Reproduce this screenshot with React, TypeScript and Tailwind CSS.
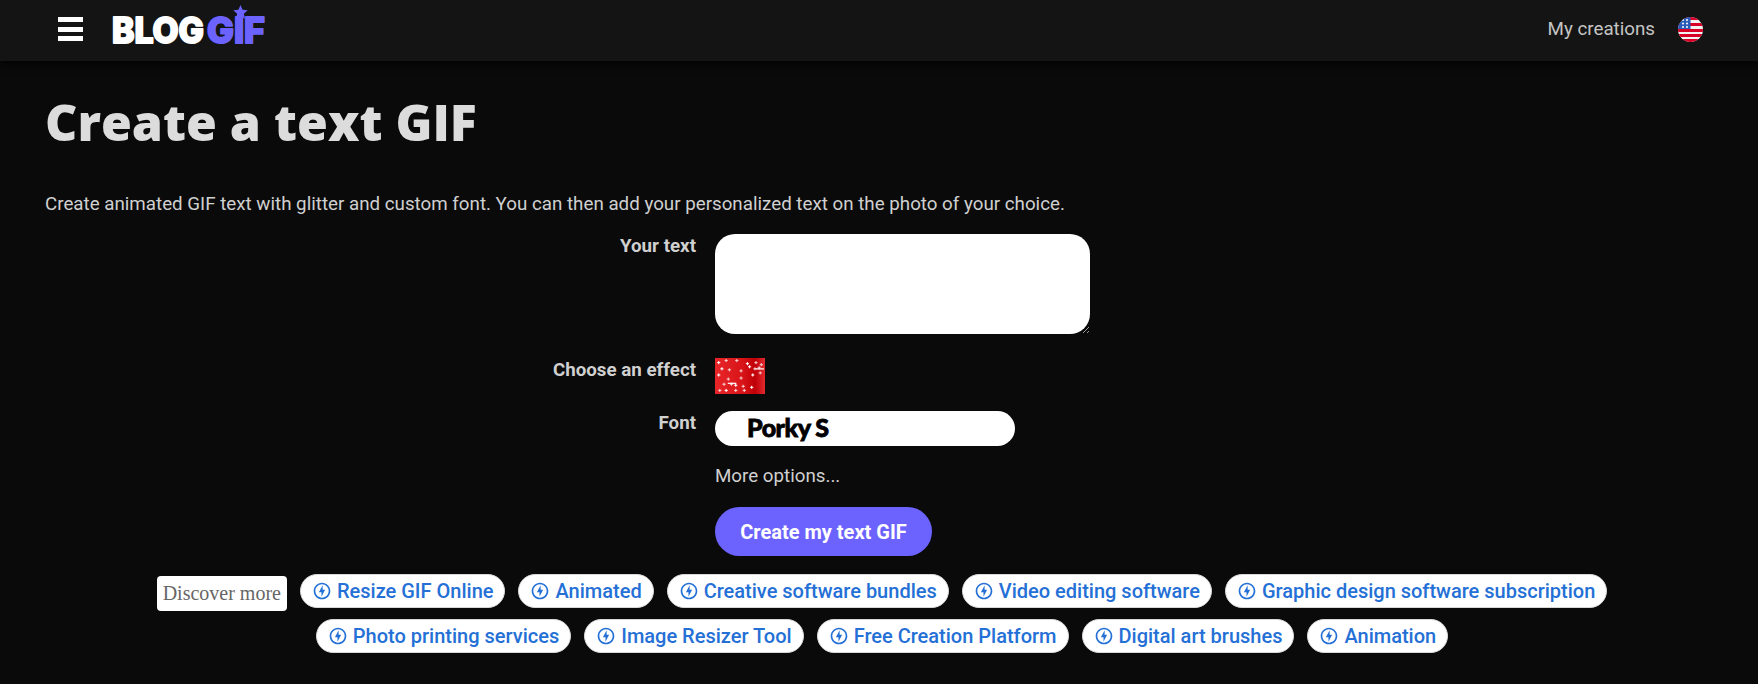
import { FC, ReactNode } from "react";
import { MdOutlineOfflineBolt } from "react-icons/md";

const row_one = [
  "Resize GIF Online",
  "Animated",
  "Creative software bundles",
  "Video editing software",
  "Graphic design software subscription",
];
const row_two = [
  "Photo printing services",
  "Image Resizer Tool",
  "Free Creation Platform",
  "Digital art brushes",
  "Animation",
];

const sparkles = [
  [3, 4], [10, 2], [20, 2], [30, 5], [38, 4], [43, 6], [6, 10], [13, 11], [24, 12], [32, 8], [37, 10], [41, 9],
  [3, 16], [12, 20], [24, 19], [35, 16], [8, 25], [15, 25], [19, 26], [26, 27], [4, 31], [10, 31], [19, 31], [27, 31],
  [34, 28], [42, 14],
];

const Glitter: FC = () => (
  <svg width="50" height="36" viewBox="0 0 47 35" preserveAspectRatio="none" className="block">
    <defs>
      <linearGradient id="glitter" x1="0" y1="0" x2="1" y2="0">
        <stop offset="0" stopColor="#e8262a" />
        <stop offset="0.55" stopColor="#d81418" />
        <stop offset="0.8" stopColor="#c00008" />
        <stop offset="1" stopColor="#e22a2e" />
      </linearGradient>
    </defs>
    <rect width="47" height="35" fill="url(#glitter)" />
    {sparkles.map(([x, y], index) => (
      <g key={index} fill="#ffffff" opacity={index % 3 === 0 ? 1 : 0.8}>
        <rect x={x - 1} y={y} width="3" height="1" />
        <rect x={x} y={y - 1} width="1" height="3" />
      </g>
    ))}
    <rect x="12" y="24" width="8" height="1.2" fill="#fff" />
    <rect x="38" y="10" width="8" height="1.2" fill="#fff" />
  </svg>
);

const UsFlag: FC = () => (
  <svg width="25" height="25" viewBox="0 0 25 25" className="block">
    <defs>
      <clipPath id="flag-circle">
        <circle cx="12.5" cy="12.5" r="12.5" />
      </clipPath>
    </defs>
    <g clipPath="url(#flag-circle)">
      <rect width="25" height="25" fill="#f2f2f2" />
      <rect y="0" width="25" height="3" fill="#d80027" />
      <rect y="6" width="25" height="3" fill="#d80027" />
      <rect y="12" width="25" height="3" fill="#d80027" />
      <rect y="17" width="25" height="3" fill="#d80027" />
      <rect y="22" width="25" height="3" fill="#d80027" />
      <rect width="12.5" height="12" fill="#2a5bb8" />
      <g fill="#fff">
        <circle cx="5" cy="3" r="1" />
        <circle cx="9" cy="3" r="1" />
        <circle cx="5" cy="6.500" r="1" />
        <circle cx="9" cy="6.500" r="1" />
        <circle cx="5" cy="10" r="1" />
        <circle cx="9" cy="10" r="1" />
      </g>
    </g>
  </svg>
);

const Logo: FC = () => (
  <svg width="156" height="46" viewBox="0 0 156 46" className="mb-[8px] block font-['Inter',sans-serif] font-extrabold">
    <text
      x="1"
      y="39"
      fontSize="35"
      textLength="92"
      lengthAdjust="spacingAndGlyphs"
      fill="#fff"
      stroke="#fff"
      strokeWidth="2"
      strokeLinejoin="round"
    >
      BLOG
    </text>
    <text
      x="96"
      y="39"
      fontSize="35"
      textLength="58"
      lengthAdjust="spacingAndGlyphs"
      fill="#6c63ff"
      stroke="#6c63ff"
      strokeWidth="2"
      strokeLinejoin="round"
    >
      GIF
    </text>
    <path
      d="M129.500 1l2.100 4.800 5.100.5-3.800 3.400 1.100 5.100-4.500-2.700-4.500 2.700 1.100-5.100-3.800-3.400 5.100-.5z"
      fill="#6c63ff"
    />
  </svg>
);

const Chip: FC<{ children: ReactNode }> = ({ children }) => (
  <a className="flex h-[34px] items-center gap-[5px] rounded-full border border-[#d8d8d8] bg-white px-[11px] text-[20px] font-medium text-[#2470d6]">
    <MdOutlineOfflineBolt className="h-[20px] w-[20px]" />
    {children}
  </a>
);

const FormRow: FC<{ label?: string; className?: string; children: ReactNode }> = ({
  label,
  className,
  children,
}) => (
  <div className={`grid grid-cols-[651px_1fr] gap-[19px] ${className ?? ""}`}>
    <label className="pt-[1px] text-right text-[18.76px] font-bold leading-[22px] text-[#d0d0d0]">{label}</label>
    <div>{children}</div>
  </div>
);

export default function App() {
  return (
    <div className="h-[684px] overflow-hidden bg-[#0a0a0a] font-['Roboto',sans-serif] text-[#d0d0d0]">
      <header className="relative flex h-[61px] items-center justify-between bg-[#141414] pl-[58px] pr-[55px] shadow-[0_2px_10px_#000]">
        <div className="flex items-center gap-[28px]">
          <div className="mb-[3px] flex w-[25px] flex-col gap-[4.5px]">
            <span className="h-[5px] bg-white" />
            <span className="h-[5px] bg-white" />
            <span className="h-[5px] bg-white" />
          </div>
          <Logo />
        </div>
        <div className="mb-[2px] flex items-center gap-[23px]">
          <span className="text-[18.76px] text-[#c4c4c4]">My creations</span>
          <UsFlag />
        </div>
      </header>

      <main className="px-[45px]">
        <h1 className="mt-[26px] font-['Open_Sans',sans-serif] text-[50px] font-extrabold leading-[70px] text-[#dcdcdc]">
          Create a text GIF
        </h1>
        <p className="mt-[35px] text-[18.76px] leading-[24px]">
          Create animated GIF text with glitter and custom font. You can then add your personalized text on the photo
          of your choice.
        </p>

        <FormRow label="Your text" className="mt-[18px]">
          <textarea className="block h-[100px] w-[375px] rounded-[20px] bg-white" />
        </FormRow>
        <FormRow label="Choose an effect" className="mt-[24px]">
          <Glitter />
        </FormRow>
        <FormRow label="Font" className="mt-[17px]">
          <div className="flex h-[35px] w-[300px] items-center rounded-full bg-white pb-[3px] pl-[32px] font-['Lato',sans-serif] text-[25px] font-black leading-none tracking-[-0.5px] text-black [-webkit-text-stroke:0.8px_#000]">
            Porky S
          </div>
        </FormRow>
        <FormRow className="mt-[18px]">
          <span className="block text-[18.76px] leading-[24px]">More options...</span>
        </FormRow>
        <FormRow className="mt-[19px]">
          <button className="h-[49px] w-[217px] rounded-full bg-[#6c63ff] text-[20px] font-bold text-white">
            Create my text GIF
          </button>
        </FormRow>
      </main>

      <section className="ml-[132px] mt-[18px] flex w-[1500px] flex-col gap-[11px]">
        <div className="flex h-[34px] items-start justify-center gap-[13px]">
          <span className="mt-[2px] flex h-[35px] items-center rounded-[4px] bg-white px-[6px] pb-[2px] font-['Liberation_Serif',serif] text-[20px] text-[#666]">
            Discover more
          </span>
          {row_one.map((item) => (
            <Chip key={item}>{item}</Chip>
          ))}
        </div>
        <div className="flex h-[34px] items-start justify-center gap-[13px]">
          {row_two.map((item) => (
            <Chip key={item}>{item}</Chip>
          ))}
        </div>
      </section>
    </div>
  );
}
